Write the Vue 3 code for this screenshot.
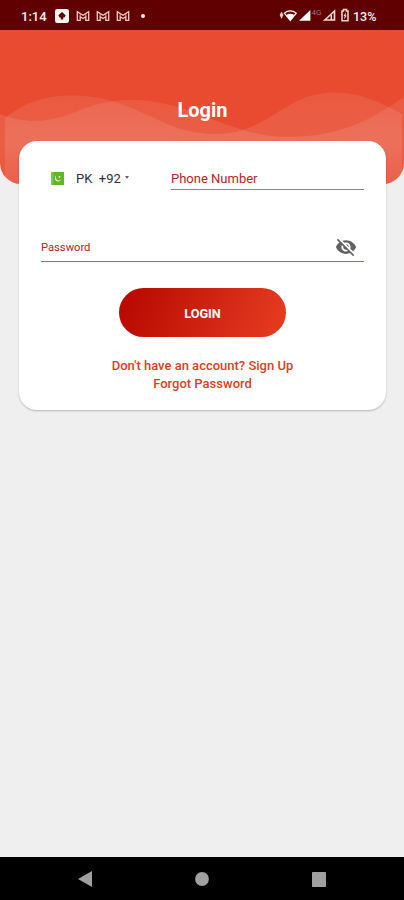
<script setup>
import { ref } from 'vue'

const phone = ref('')
const password = ref('')
const mails = [0, 1, 2]
</script>

<template>
  <div class="screen">
    <header class="status">
      <span class="clock">1:14</span>
      <svg class="app-icon" width="14" height="14" viewBox="0 0 14 14">
        <rect width="14" height="14" rx="2.2" fill="#fff4f1" />
        <path d="M7 3 10.600 6.300 9.500 8.400H8.200V10.600H5.800V8.400H4.500L3.400 6.300Z" fill="#600000" />
      </svg>
      <svg v-for="m in mails" :key="m" class="mail" width="14" height="12" viewBox="0 0 14 12">
        <path d="M1.300 10.300V1.700L7 5.300l5.700-3.600V10.300H9.800V6.800L7 8.600 4.200 6.800V10.300Z" fill="none" stroke="#f4cbc5" stroke-width="1.300" />
        <path d="M4.200 3.600V7M9.800 3.600V7" stroke="#d9a19b" stroke-width="1" />
      </svg>
      <i class="dot"></i>
      <span class="spacer"></span>
      <svg class="signals" width="74" height="18" viewBox="0 0 74 18">
        <path d="M2.500 4.500 4.400 8 2.500 12 .7 8Z" fill="#efc9c4" />
        <path d="M5.300 6.200Q11.200 1.700 17.300 6.200L11.300 13.500Z" fill="none" stroke="#fff" stroke-width="1.200" />
        <path d="M7.300 8.100Q11.300 5.400 15.300 8.100L11.300 13.500Z" fill="#fff" />
        <path d="M20 13.700 31.400 3v10.700Z" fill="#fff" />
        <text x="32.500" y="7.800" class="net">4G</text>
        <path d="M45.800 13 55.500 4v9Z" fill="none" stroke="#f8dcd8" stroke-width="1.600" />
        <path d="M52.300 8v5" stroke="#f8dcd8" stroke-width="1.500" />
        <path d="M63 4h1.500V2.600h3V4H69v9.700h-6Z" fill="none" stroke="#f8dcd8" stroke-width="1.500" />
        <path d="M67 5.300 64.600 9h1.200L65 12.400 67.700 8.400h-1.300Z" fill="#fff" />
      </svg>
      <span class="percent">13%</span>
    </header>

    <main>
      <section class="hero">
        <svg class="waves" width="404" height="154" viewBox="0 0 404 154" preserveAspectRatio="none">
          <defs>
            <linearGradient id="mist" x1="0" y1="60" x2="0" y2="154" gradientUnits="userSpaceOnUse">
              <stop offset="0" stop-color="#fff" stop-opacity=".08" />
              <stop offset=".55" stop-color="#fff" stop-opacity=".11" />
              <stop offset="1" stop-color="#fff" stop-opacity=".06" />
            </linearGradient>
          </defs>
          <path d="M5 88C25 72 45 65.500 72 65.500C137 65.500 158 104 216 104C269 104 284 62.500 334 62.500C363 62.500 382 74 402 84V154H5Z" fill="url(#mist)" />
          <path d="M0 84C14 89 24 91 36 91C70 91 85 70 132 70C190 70 230 107 288 107C343 107 375 87 404 67V154H0Z" fill="url(#mist)" />
        </svg>
        <h1>Login</h1>
      </section>

      <form class="card" @submit.prevent>
        <div class="phone-row">
          <button type="button" class="country">
            <svg width="13" height="13" viewBox="0 0 13 13">
              <rect width="13" height="13" fill="#62b824" />
              <rect width="2.400" height="13" fill="#7cc848" />
              <path d="M5.300 3.600a3.200 3.200 0 1 0 4.700 4A3.100 3.100 0 0 1 5.300 3.600Z" fill="#fff" />
              <circle cx="8.500" cy="4.800" r=".9" fill="#fff" />
            </svg>
            <span class="iso">PK</span>
            <span class="dial">+92</span>
            <i class="caret"></i>
          </button>
          <input v-model="phone" class="phone" type="tel" placeholder="Phone Number" />
        </div>

        <div class="password-row">
          <input v-model="password" type="password" placeholder="Password" />
          <svg class="eye" width="22" height="22" viewBox="0 0 24 24">
            <path fill="#626262" d="M12 7c2.760 0 5 2.240 5 5 0 .65-.13 1.260-.36 1.830l2.920 2.920c1.510-1.260 2.700-2.890 3.430-4.750-1.730-4.390-6-7.500-11-7.500-1.400 0-2.740.25-3.980.7l2.160 2.160C10.740 7.130 11.350 7 12 7zM2 4.270l2.280 2.280.46.46C3.080 8.300 1.780 10.020 1 12c1.730 4.390 6 7.500 11 7.500 1.550 0 3.030-.3 4.380-.84l.42.42L19.730 22 21 20.730 3.270 3 2 4.270zM7.530 9.800l1.550 1.550c-.05.21-.08.43-.08.65 0 1.660 1.340 3 3 3 .22 0 .44-.03.65-.08l1.550 1.550c-.67.33-1.410.53-2.200.53-2.760 0-5-2.240-5-5 0-.79.2-1.530.53-2.200zm4.310-.78 3.150 3.150.02-.16c0-1.660-1.340-3-3-3l-.17.01z" />
          </svg>
        </div>

        <button class="submit" type="submit">LOGIN</button>
        <nav class="links">
          <a class="signup">Don't have an account? Sign Up</a>
          <a class="forgot">Forgot Password</a>
        </nav>
      </form>
    </main>

    <footer class="navbar">
      <svg width="14" height="16" viewBox="0 0 14 16"><path d="M0 8 14 0v16Z" fill="#a0a0a0" /></svg>
      <svg width="14" height="14" viewBox="0 0 14 14"><circle cx="7" cy="7" r="6.900" fill="#a0a0a0" /></svg>
      <svg width="14" height="15" viewBox="0 0 14 15"><rect width="14" height="15" rx=".7" fill="#a0a0a0" /></svg>
    </footer>
  </div>
</template>

<style>
body {
  margin: 0;
  background: #efefef;
}
</style>

<style scoped>
.screen {
  box-sizing: border-box;
  display: flex;
  flex-direction: column;
  width: 404px;
  height: 900px;
  overflow: hidden;
  background: #efefef;
  font-family: Roboto, "Liberation Sans", sans-serif;
}
.status {
  box-sizing: border-box;
  display: flex;
  align-items: center;
  height: 30px;
  padding: 2px 27px 0 21px;
  background: #600000;
  color: #fff0ed;
}
.clock {
  width: 34px;
  font-size: 13px;
  font-weight: 500;
}
.app-icon {
  margin-right: 7px;
}
.mail {
  margin-right: 6px;
}
.dot {
  width: 4px;
  height: 4px;
  margin-left: 5px;
  border-radius: 50%;
  background: #fff0ed;
}
.spacer {
  flex: 1;
}
.net {
  font: 8px Roboto, sans-serif;
  fill: #b96b65;
}
.percent {
  width: 24px;
  font-size: 12.5px;
  font-weight: 500;
  white-space: nowrap;
}
main {
  flex: 1;
}
.hero {
  display: grid;
  height: 154px;
  overflow: hidden;
  border-radius: 0 0 21px 21px;
  background: #e84b30;
}
.waves,
h1 {
  grid-area: 1 / 1;
}
h1 {
  z-index: 1;
  margin: 67px 0 0 1px;
  color: #fff;
  font-size: 20px;
  font-weight: 700;
  line-height: 26px;
  text-align: center;
}
.card {
  position: relative;
  box-sizing: border-box;
  display: flex;
  flex-direction: column;
  width: 367px;
  height: 269px;
  margin: -43px 0 0 19px;
  padding: 24px 22px 0;
  border-radius: 18px;
  background: #fff;
  box-shadow: 0 1px 2px rgba(0, 0, 0, 0.24);
}
.phone-row {
  display: flex;
  justify-content: space-between;
  height: 25px;
}
.country {
  display: flex;
  align-items: center;
  padding: 2px 0 0 10px;
  border: 0;
  background: none;
  color: #303030;
  font: 13px Roboto, sans-serif;
}
.country svg {
  margin-bottom: 1px;
}
.iso {
  margin-left: 12px;
}
.dial {
  margin-left: 6.5px;
}
.caret {
  margin: 0 0 2px 4px;
  border: 2.5px solid transparent;
  border-top: 3px solid #666;
  border-bottom: 0;
}
input {
  box-sizing: border-box;
  padding: 0;
  border: 0;
  outline: 0;
  background: none;
  font-family: Roboto, sans-serif;
}
input::placeholder {
  color: #b4242a;
  opacity: 1;
}
.phone {
  width: 193px;
  height: 25px;
  padding-top: 3px;
  border-bottom: 1px solid #858585;
  font-size: 13px;
}
.password-row {
  box-sizing: border-box;
  display: flex;
  align-items: center;
  height: 30px;
  margin-top: 42px;
  padding: 1px 7px 0 0;
  border-bottom: 1px solid #e0574b;
}
.password-row input {
  flex: 1;
  font-size: 11.2px;
}
.submit {
  align-self: center;
  width: 167px;
  height: 49px;
  margin-top: 26px;
  padding: 2px 0 0;
  border: 0;
  border-radius: 25px;
  background: linear-gradient(110deg, #b90b02 8%, #e3391f 92%);
  color: #fff;
  font: 700 12.7px Roboto, sans-serif;
}
.links {
  display: flex;
  flex-direction: column;
  align-items: center;
  margin-top: 20px;
  color: #d83f2a;
  font-size: 13px;
  font-weight: 500;
  line-height: 18px;
}
.navbar {
  box-sizing: border-box;
  display: flex;
  align-items: center;
  justify-content: space-between;
  height: 43px;
  padding: 1px 78px 0;
  background: #000;
}
</style>
